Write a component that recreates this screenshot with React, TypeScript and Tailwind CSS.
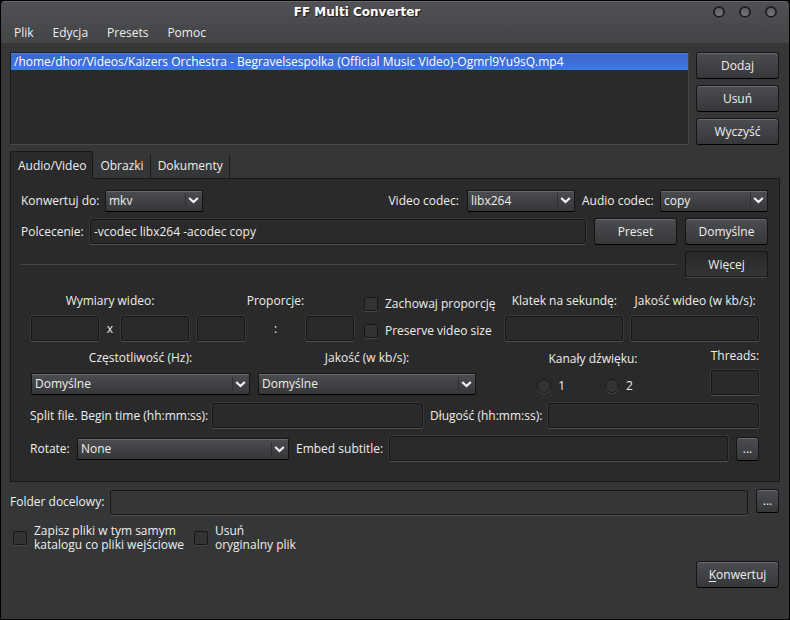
import type { InputHTMLAttributes, ReactNode } from "react";
import clsx from "clsx";

const MENU = ["Plik", "Edycja", "Presets", "Pomoc"];
const TABS = ["Audio/Video", "Obrazki", "Dokumenty"];
const FILES = [
  "/home/dhor/Videos/Kaizers Orchestra - Begravelsespolka (Official Music Video)-Ogmrl9Yu9sQ.mp4",
];

interface ButtonProps {
  children: ReactNode;
  className?: string;
  label?: string;
}

function Button({ children, className, label }: ButtonProps) {
  return (
    <button
      type="button"
      aria-label={label}
      className={clsx(
        "shrink-0 rounded-[3px] border border-[#151516] border-b-black bg-linear-to-b from-[#4c4d51] to-[#363739] text-center shadow-[inset_0_1px_0_#6a6b6e]",
        className ?? "h-[27px] w-[83px]"
      )}
    >
      {children}
    </button>
  );
}

function TextInput({ className, ...rest }: InputHTMLAttributes<HTMLInputElement>) {
  return (
    <input
      type="text"
      className={clsx(
        "h-[27px] min-w-0 rounded-[3px] border border-[#383839] border-b-[#4e4e50] bg-transparent px-1 shadow-[inset_0_0_0_1px_#171718] outline-none",
        className
      )}
      {...rest}
    />
  );
}

interface SelectProps {
  id: string;
  value: string;
  className?: string;
}

function Select({ id, value, className }: SelectProps) {
  return (
    <div className={clsx("relative h-[22px] shrink-0", className)}>
      <select
        id={id}
        defaultValue={value}
        className="h-full w-full appearance-none rounded-[2px] border border-[#151516] border-b-black bg-linear-to-b from-[#4c4d51] to-[#363739] pr-5 pl-[3px] leading-4 shadow-[inset_0_1px_0_#6a6b6e] outline-none"
      >
        <option>{value}</option>
      </select>
      <span className="pointer-events-none absolute inset-y-1 right-0 flex w-[18px] items-center border-l border-[#2e2f31] pl-0.5">
        <svg width="11" height="8" viewBox="0 0 11 8" fill="none" stroke="#f0f0f0" strokeWidth="2.3">
          <path d="M1.2 2 5.5 6 9.8 2" />
        </svg>
      </span>
    </div>
  );
}

interface CheckProps {
  id: string;
  children: ReactNode;
  type?: "checkbox" | "radio";
  name?: string;
}

function Check({ id, children, type = "checkbox", name }: CheckProps) {
  return (
    <div className="flex items-center gap-[7px]">
      <input
        id={id}
        type={type}
        name={name}
        className={clsx(
          "size-3.5 shrink-0 appearance-none border border-[#171718] bg-[#323334] shadow-[0_1px_0_#454547] checked:bg-[#3f72dc]",
          type === "radio" ? "rounded-full" : "rounded-[2px]"
        )}
      />
      <label htmlFor={id} className="whitespace-nowrap">
        {children}
      </label>
    </div>
  );
}

function Header() {
  return (
    <header className="bg-linear-to-b from-[#505154] to-[#434446] shadow-[inset_0_1px_0_#69696c]">
      <div className="flex h-[22px] items-center">
        <h1 className="flex-1 text-center font-['DejaVu_Sans'] text-[12px] font-bold text-white [text-shadow:1px_1px_1px_#1a1a1a]">
          FF Multi Converter
        </h1>
        <div className="flex justify-end gap-3.5 pr-3">
          {["Minimalizuj", "Maksymalizuj", "Zamknij"].map((name) => (
            <button
              key={name}
              type="button"
              aria-label={name}
              className="size-3 rounded-full border-2 border-[#1f2021] bg-linear-to-b from-[#5c5d60] to-[#77787a] shadow-[0_1px_0_#5c5d60]"
            />
          ))}
        </div>
      </div>
      <nav className="flex h-5 items-center gap-[19px] px-[13px]">
        {MENU.map((item) => (
          <button key={item} type="button">
            {item}
          </button>
        ))}
      </nav>
    </header>
  );
}

function FileList() {
  return (
    <section className="flex gap-[7px] pr-px">
      <ul className="min-w-0 flex-1 border border-[#1c1c1d] border-r-[#48494b] border-b-[#48494b] bg-[#2a2a2a]">
        {FILES.map((file) => (
          <li
            key={file}
            className="h-[17px] truncate bg-linear-to-b from-[#3a66c4] to-[#3f78e6] pl-[3px] leading-[17px] text-white shadow-[inset_0_1px_0_#4b80e8]"
          >
            {file}
          </li>
        ))}
      </ul>
      <div className="flex flex-col gap-1.5">
        <Button>Dodaj</Button>
        <Button>Usuń</Button>
        <Button>Wyczyść</Button>
      </div>
    </section>
  );
}

function Tabs() {
  return (
    <div role="tablist" className="relative -mb-px flex h-7 items-end">
      {TABS.map((tab, i) => (
        <button
          key={tab}
          type="button"
          role="tab"
          aria-selected={i === 0}
          className={
            i === 0
              ? "h-7 rounded-t-[3px] border border-b-0 border-[#171718] bg-[#2a2a2a] pr-1.5 pl-[7px]"
              : "mb-px h-6 border-r border-[#1c1c1d] pr-1.5 pl-[7px]"
          }
        >
          {tab}
        </button>
      ))}
    </div>
  );
}

function AdvancedOptions() {
  return (
    <div className="flex flex-col gap-1.5 pt-2 pr-2 pl-[9px]">
      <div className="flex items-start">
        <div className="flex flex-col items-center gap-1.5 pt-px">
          <label htmlFor="width">Wymiary wideo:</label>
          <div className="flex items-center">
            <TextInput id="width" className="w-[70px]" />
            <span className="w-5 text-center">x</span>
            <TextInput aria-label="Wysokość" className="w-[70px]" />
          </div>
        </div>
        <div className="ml-1.5 flex flex-col items-center gap-1.5 pt-px">
          <label htmlFor="aspect">Proporcje:</label>
          <div className="flex items-center">
            <TextInput id="aspect" className="w-[50px]" />
            <span className="w-[59px] text-center">:</span>
            <TextInput aria-label="Proporcje, druga wartość" className="w-[50px]" />
          </div>
        </div>
        <div className="ml-[9px] flex flex-col gap-[11px] pt-1">
          <Check id="keep-aspect">Zachowaj proporcję</Check>
          <Check id="keep-size">Preserve video size</Check>
        </div>
        <div className="ml-[9px] flex flex-12 flex-col items-center gap-1.5 pt-px">
          <label htmlFor="fps" className="whitespace-nowrap">Klatek na sekundę:</label>
          <TextInput id="fps" className="w-full" />
        </div>
        <div className="ml-1.5 flex flex-13 flex-col items-center gap-1.5 pt-px">
          <label htmlFor="vbitrate" className="whitespace-nowrap">Jakość wideo (w kb/s):</label>
          <TextInput id="vbitrate" className="w-full" />
        </div>
      </div>

      <div className="-mt-px flex items-start">
        <div className="ml-px flex flex-col items-center gap-[7px] pt-[3px]">
          <label htmlFor="freq">Częstotliwość (Hz):</label>
          <Select id="freq" value="Domyślne" className="w-[219px]" />
        </div>
        <div className="ml-2 flex flex-col items-center gap-[7px] pt-[3px]">
          <label htmlFor="abitrate">Jakość (w kb/s):</label>
          <Select id="abitrate" value="Domyślne" className="w-[218px]" />
        </div>
        <fieldset className="flex flex-1 flex-col items-center gap-[11px] pt-1">
          <legend className="contents">
            <span>Kanały dźwięku:</span>
          </legend>
          <div className="flex gap-10 pr-4">
            <Check id="mono" type="radio" name="channels">1</Check>
            <Check id="stereo" type="radio" name="channels">2</Check>
          </div>
        </fieldset>
        <div className="flex w-[50px] flex-col items-center gap-[5px] pt-px">
          <label htmlFor="threads">Threads:</label>
          <TextInput id="threads" className="w-full" />
        </div>
      </div>

      <div className="flex items-center">
        <label htmlFor="begin" className="w-[181px] whitespace-nowrap">Split file. Begin time (hh:mm:ss):</label>
        <TextInput id="begin" className="flex-1" />
        <label htmlFor="duration" className="ml-1.5 w-[117px] whitespace-nowrap">Długość (hh:mm:ss):</label>
        <TextInput id="duration" className="flex-1" />
      </div>

      <div className="flex items-center pr-px">
        <label htmlFor="rotate" className="w-[47px]">Rotate:</label>
        <Select id="rotate" value="None" className="w-[212px]" />
        <label htmlFor="subtitle" className="ml-[7px] w-[92px] whitespace-nowrap">Embed subtitle:</label>
        <TextInput id="subtitle" className="mr-[7px] flex-1" />
        <Button label="Wybierz napisy" className="h-6 w-[23px]">...</Button>
      </div>
    </div>
  );
}

function AudioVideoPanel() {
  return (
    <section className="flex flex-col gap-1.5 border border-[#171718] bg-[#2a2a2a] pt-2.5 pr-[11px] pb-[19px] pl-2.5">
      <div className="flex h-[23px] items-start leading-[23px]">
        <label htmlFor="format" className="w-[84px] whitespace-nowrap">Konwertuj do:</label>
        <Select id="format" value="mkv" className="w-[98px]" />
        <label htmlFor="vcodec" className="ml-auto">Video codec:</label>
        <Select id="vcodec" value="libx264" className="ml-2 w-[108px]" />
        <label htmlFor="acodec" className="ml-[7px] w-[78px] whitespace-nowrap">Audio codec:</label>
        <Select id="acodec" value="copy" className="w-[108px]" />
      </div>
      <div className="flex items-center">
        <label htmlFor="command" className="w-[68px]">Polcecenie:</label>
        <TextInput id="command" defaultValue="-vcodec libx264 -acodec copy" className="mr-[7px] flex-1" />
        <Button>Preset</Button>
        <span className="w-2" />
        <Button>Domyślne</Button>
      </div>
      <div className="flex items-center gap-2">
        <hr className="flex-1 border-[#444548]" />
        <button
          type="button"
          aria-pressed="true"
          className="h-[27px] w-[83px] rounded-[3px] border border-[#171718] border-b-[#48484a] bg-linear-to-b from-[#272829] to-[#343537] shadow-[inset_0_-1px_0_#1c1c1d]"
        >
          Więcej
        </button>
      </div>
      <AdvancedOptions />
    </section>
  );
}

export default function App() {
  return (
    <div className="min-h-screen bg-black font-['Open_Sans','Noto_Sans',sans-serif] text-[12px] leading-4 text-[#eeeeec]">
      <div className="flex min-h-screen flex-col overflow-hidden rounded-t-[5px] border border-black bg-[#353638]">
        <Header />
        <main className="flex flex-col px-[9px] pt-[9px]">
          <FileList />
          <div className="mt-1.5">
            <Tabs />
            <AudioVideoPanel />
          </div>
          <div className="mt-[7px] flex items-start pr-px">
            <label htmlFor="folder" className="w-[99px] leading-[26px] whitespace-nowrap">Folder docelowy:</label>
            <TextInput id="folder" className="mr-[7px] flex-1" />
            <Button label="Wybierz folder" className="h-6 w-[23px]">...</Button>
          </div>
          <div className="mt-2 flex gap-2.5 pl-[3px] leading-3.5">
            <Check id="same-dir">
              Zapisz pliki w tym samym
              <br />
              katalogu co pliki wejściowe
            </Check>
            <Check id="delete-original">
              Usuń
              <br />
              oryginalny plik
            </Check>
          </div>
          <div className="mt-[9px] flex justify-end pr-px">
            <Button>
              <u className="underline-offset-2">K</u>onwertuj
            </Button>
          </div>
        </main>
      </div>
    </div>
  );
}
